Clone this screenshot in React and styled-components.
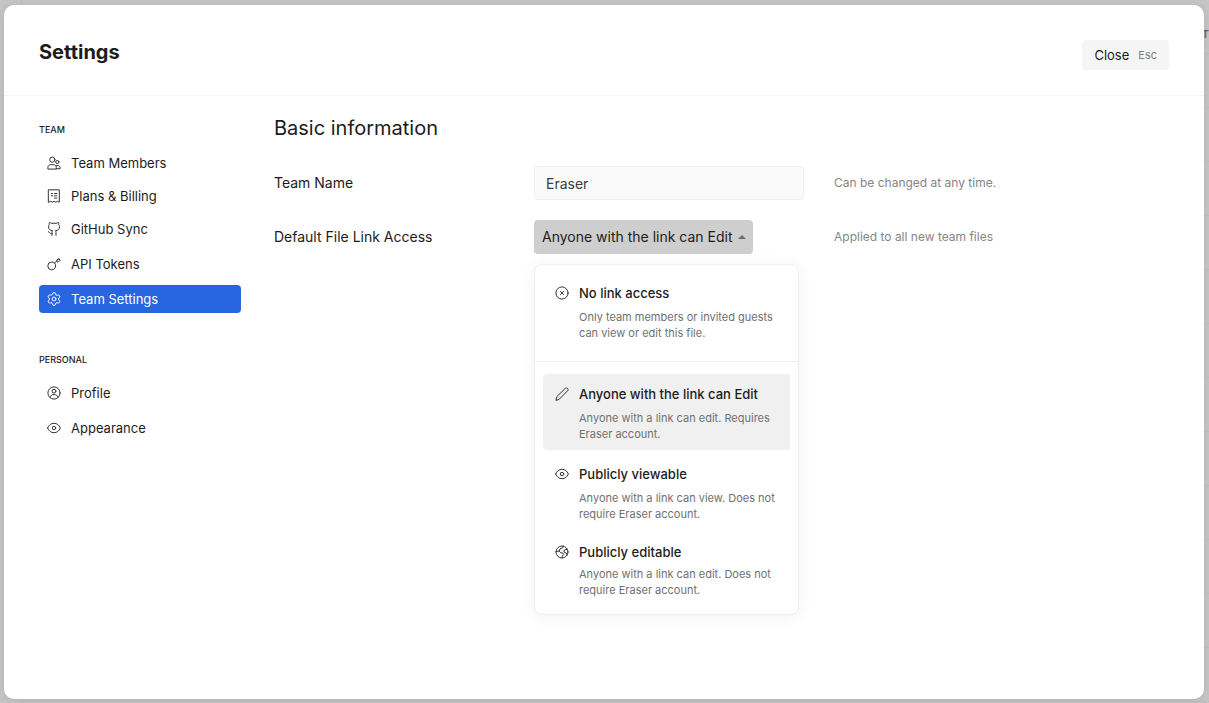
import React, { useState } from 'react';
import styled, { createGlobalStyle, css } from 'styled-components';

const Global = createGlobalStyle`
  *, *::before, *::after { box-sizing: border-box; }
  html, body, #root { height: 100%; }
  body {
    margin: 0;
    background: #c5c5c5;
    color: #1c1c1c;
    font-family: Inter, "Liberation Sans", sans-serif;
    -webkit-font-smoothing: antialiased;
  }
  button, input, select { font: inherit; color: inherit; }
  h1, h2, h3, p, ul { margin: 0; padding: 0; }
  ul { list-style: none; }
`;

const Backdrop = styled.div`
  position: relative;
  min-height: 100%;
  display: flex;
  padding: 5px 5px 4px 4px;
  overflow: hidden;
`;

const PageBehind = styled.div`
  position: absolute;
  inset: 0 0 0 21px;
  display: flex;
  justify-content: flex-end;
  padding-top: 26px;
  border-left: 1px solid #bebebe;
  background: repeating-linear-gradient(transparent 0 53px, #bdbdbd 53px 54px);
  color: #636363;
  font-size: 11px;
  font-weight: 600;
  line-height: 16px;
`;

const Modal = styled.section`
  position: relative;
  flex: 1;
  min-width: 0;
  display: flex;
  flex-direction: column;
  background: #fff;
  border-radius: 10px;
  box-shadow: 0 1px 8px rgba(0, 0, 0, 0.1);
`;

const Header = styled.header`
  display: flex;
  align-items: flex-start;
  justify-content: space-between;
  height: 91px;
  padding: 35px 35px 0;
  border-bottom: 1px solid #f4f4f4;
`;

const Title = styled.h1`
  font-size: 20px;
  font-weight: 700;
  line-height: 24px;
`;

const CloseButton = styled.button`
  display: flex;
  align-items: center;
  gap: 9px;
  height: 30px;
  padding: 0 12px;
  border: 0;
  border-radius: 4px;
  background: #f5f5f5;
  font-size: 13px;
`;

const Shortcut = styled.span`
  color: #808080;
  font-size: 11px;
`;

const Body = styled.div`
  flex: 1;
  display: flex;
  gap: 33px;
  padding: 0 35px;
`;

const Sidebar = styled.nav`
  flex: 0 0 202px;
  padding-top: 26px;
`;

const NavSection = styled.section`
  margin-bottom: 39px;
`;

const NavHeading = styled.h2`
  margin-bottom: 11px;
  font-size: 9px;
  font-weight: 500;
  line-height: 16px;
`;

const NavItem = styled.li`
  margin-top: ${(p) => (p.$tight ? 5 : 7)}px;
  &:first-child { margin-top: 0; }
`;

const Icon = styled.svg`
  flex: none;
  width: 14px;
  height: 14px;
  fill: none;
  stroke: #333;
  stroke-width: 1;
  stroke-linecap: round;
  stroke-linejoin: round;
`;

const NavLink = styled.a`
  display: flex;
  align-items: center;
  gap: 10px;
  height: 28px;
  padding: 0 8px;
  border-radius: 4px;
  color: inherit;
  font-size: 13px;
  line-height: 20px;
  text-decoration: none;
  ${(p) => p.$active && css`
    background: #2765e1;
    color: #fff;
    ${Icon} { stroke: #fff; }
  `}
`;

const Content = styled.main`
  flex: 1;
  min-width: 0;
  padding-top: 18px;
`;

const SectionTitle = styled.h2`
  margin-bottom: 24px;
  font-size: 20px;
  font-weight: 400;
  line-height: 28px;
`;

const Field = styled.div`
  display: grid;
  grid-template-columns: 230px 270px minmax(0, 1fr);
  column-gap: 30px;
  align-items: center;
  height: 34px;
  margin-bottom: 20px;
`;

const FieldLabel = styled.label`
  font-size: 14px;
  line-height: 20px;
`;

const Hint = styled.p`
  color: #858585;
  font-size: 12px;
  line-height: 16px;
`;

const TextInput = styled.input`
  width: 100%;
  height: 34px;
  padding: 0 11px;
  border: 1px solid #f0f0f0;
  border-radius: 4px;
  background: #fafafa;
  color: #3c3c3c;
  font-size: 14px;
`;

const Picker = styled.div`
  position: relative;
  justify-self: start;
`;

const Select = styled.select`
  display: block;
  height: 34px;
  padding: 0 20px 2px 8px;
  border: 0;
  border-radius: 4px;
  background: #cecece;
  font-size: 14px;
  appearance: none;
`;

const Caret = styled.span`
  position: absolute;
  top: 15px;
  right: 7px;
  border: solid transparent;
  border-width: 0 4px 4px;
  border-bottom-color: #6c6c6c;
  pointer-events: none;
`;

const Menu = styled.div`
  position: absolute;
  top: 44px;
  left: 0;
  width: 265px;
  border: 1px solid #f0f0f0;
  border-radius: 8px;
  background: #fff;
  box-shadow: 0 2px 16px rgba(0, 0, 0, 0.06);
`;

const MenuGroup = styled.div`
  display: flex;
  flex-direction: column;
  gap: 4px;
  padding: 8px 8px 12px;
  & + & {
    padding: 12px 8px 8px;
    border-top: 1px solid #f0f0f0;
  }
`;

const Option = styled.button`
  display: grid;
  grid-template-columns: 14px minmax(0, 1fr);
  column-gap: 10px;
  width: 100%;
  padding: ${(p) => (p.$snug ? 8 : 10)}px 12px 8px;
  border: 0;
  border-radius: 4px;
  background: ${(p) => (p.$selected ? '#f0f0f0' : 'transparent')};
  text-align: left;
  ${Icon} { margin-top: 3px; }
`;

const OptionName = styled.span`
  display: block;
  margin-bottom: ${(p) => (p.$snug ? 4 : 6)}px;
  font-size: 13px;
  font-weight: 500;
  line-height: 20px;
`;

const OptionText = styled.span`
  display: block;
  color: #707070;
  font-size: 11px;
  line-height: 16px;
`;

const shapes = {
  members: <><circle cx="5.3" cy="3.7" r="2.6" /><circle cx="10.3" cy="6" r="1.6" /><path d="M.9 12.7v-1.2C.9 9.8 2 8.7 3.7 8.7h2.8c1.7 0 2.8 1.1 2.8 2.8v1.2zM9.3 9.6h1.5c1.5 0 2.3.9 2.3 2.1v1H9.3" /></>,
  billing: <><path d="M1.7.8h10.6v12.4l-1.8-.9-1.7.9-1.8-.9-1.8.9-1.7-.9-1.8.9z" /><path d="M4.3 4.5h1.2M7.5 4.5h2.3M4.3 6.8h1.2M7.5 6.8h2.3M7.5 9.1h2.3" /></>,
  github: <><path d="M5 13.4v-3c0-.7.2-1.2.7-1.6-2.6-.3-4.2-1.5-4.2-4 0-.9.3-1.6.8-2.2-.2-.7-.2-1.3.1-2 1 0 1.8.4 2.5.8a9 9 0 0 1 4.2 0c.7-.4 1.5-.8 2.5-.8.3.7.3 1.3.1 2 .5.6.8 1.3.8 2.2 0 2.5-1.6 3.7-4.2 4 .5.4.7.9.7 1.6v3M5 11.4c-1.300.4-2 0-2.500-.8-.3-.5-.6-.8-1.100-.9" /></>,
  key: <><circle cx="4.7" cy="8.9" r="3.9" /><path d="m7.5 6.1 4.3-4.3M9.6 4l1.4 1.4 2.2-2.2-1.4-1.4z" /></>,
  settings: <g transform="translate(-.8 -.8) scale(.65)" strokeWidth="1.5"><path d="M9.671 4.136a2.34 2.34 0 0 1 4.659 0 2.34 2.34 0 0 0 3.319 1.915 2.34 2.34 0 0 1 2.33 4.033 2.34 2.34 0 0 0 0 3.831 2.34 2.34 0 0 1-2.33 4.033 2.34 2.34 0 0 0-3.319 1.915 2.34 2.34 0 0 1-4.659 0 2.34 2.34 0 0 0-3.32-1.915 2.34 2.34 0 0 1-2.33-4.033 2.34 2.34 0 0 0 0-3.831A2.34 2.34 0 0 1 6.35 6.051a2.34 2.34 0 0 0 3.319-1.915" /><circle cx="12" cy="12" r="3" /></g>,
  profile: <><circle cx="7" cy="7" r="6.1" /><circle cx="7" cy="5.2" r="1.9" /><path d="M3 11.3c.4-1.9 1.9-2.7 4-2.7s3.6.8 4 2.7" /></>,
  eye: <><path d="M.6 7c1.3-3 3.5-4.7 6.4-4.7S12.1 4 13.4 7c-1.3 3-3.5 4.7-6.4 4.7S1.9 10 .6 7z" /><circle cx="7" cy="7" r="1.7" /></>,
  blocked: <><circle cx="7" cy="7" r="6.1" /><path d="m5.4 5.4 3.2 3.2m0-3.2L5.4 8.6" /></>,
  pencil: <path d="m1 13 .8-3.3L10.3 1.3c1.4-1.3 3.7.9 2.4 2.4L4.3 12.2z" />,
  globe: <><circle cx="7" cy="7" r="6" /><path d="M1.2 6.5 4.3 6l.8-2.2 2.6-1 .6-1.7M4.3 6l1.2 1.7 2.3.3.9 1.5-1.5 1.7.2 1.7M12.1 4.2 9.3 5l-.4 2 2.3 1 .9 2" /></>,
};

const Glyph = ({ name }) => (
  <Icon viewBox="0 0 14 14" aria-hidden="true">{shapes[name]}</Icon>
);

const navigation = [
  { title: 'TEAM', items: [
    { icon: 'members', label: 'Team Members' },
    { icon: 'billing', label: 'Plans & Billing', tight: true },
    { icon: 'github', label: 'GitHub Sync', tight: true },
    { icon: 'key', label: 'API Tokens' },
    { icon: 'settings', label: 'Team Settings', active: true },
  ] },
  { title: 'PERSONAL', items: [
    { icon: 'profile', label: 'Profile' },
    { icon: 'eye', label: 'Appearance' },
  ] },
];

const accessGroups = [
  [{ id: 'none', icon: 'blocked', name: 'No link access', text: 'Only team members or invited guests can view or edit this file.' }],
  [
    { id: 'edit', icon: 'pencil', name: 'Anyone with the link can Edit', text: 'Anyone with a link can edit. Requires Eraser account.' },
    { id: 'view', icon: 'eye', name: 'Publicly viewable', text: 'Anyone with a link can view. Does not require Eraser account.' },
    { id: 'public', icon: 'globe', name: 'Publicly editable', text: 'Anyone with a link can edit. Does not require Eraser account.', snug: true },
  ],
];

export default function App() {
  const [team, setTeam] = useState('Eraser');
  const [access, setAccess] = useState('edit');
  const [open, setOpen] = useState(true);

  return (
    <>
      <Global />
      <Backdrop>
        <PageBehind aria-hidden="true">T</PageBehind>
        <Modal role="dialog" aria-labelledby="settings-title">
          <Header>
            <Title id="settings-title">Settings</Title>
            <CloseButton type="button">Close <Shortcut>Esc</Shortcut></CloseButton>
          </Header>
          <Body>
            <Sidebar aria-label="Settings sections">
              {navigation.map((section) => (
                <NavSection key={section.title}>
                  <NavHeading>{section.title}</NavHeading>
                  <ul>
                    {section.items.map((item) => (
                      <NavItem key={item.label} $tight={item.tight}>
                        <NavLink href="#" $active={item.active} aria-current={item.active ? 'page' : undefined}>
                          <Glyph name={item.icon} />
                          {item.label}
                        </NavLink>
                      </NavItem>
                    ))}
                  </ul>
                </NavSection>
              ))}
            </Sidebar>
            <Content>
              <SectionTitle>Basic information</SectionTitle>
              <Field>
                <FieldLabel htmlFor="team-name">Team Name</FieldLabel>
                <TextInput id="team-name" value={team} onChange={(e) => setTeam(e.target.value)} />
                <Hint>Can be changed at any time.</Hint>
              </Field>
              <Field>
                <FieldLabel htmlFor="link-access">Default File Link Access</FieldLabel>
                <Picker>
                  <Select
                    id="link-access"
                    value={access}
                    onChange={(e) => setAccess(e.target.value)}
                    onMouseDown={(e) => { e.preventDefault(); setOpen(!open); }}
                  >
                    {accessGroups.flat().map((o) => <option key={o.id} value={o.id}>{o.name}</option>)}
                  </Select>
                  <Caret />
                  {open && (
                    <Menu>
                      {accessGroups.map((group) => (
                        <MenuGroup key={group[0].id}>
                          {group.map((o) => (
                            <Option
                              key={o.id}
                              type="button"
                              $snug={o.snug}
                              $selected={o.id === access}
                              aria-pressed={o.id === access}
                              onClick={() => { setAccess(o.id); setOpen(false); }}
                            >
                              <Glyph name={o.icon} />
                              <span>
                                <OptionName $snug={o.snug}>{o.name}</OptionName>
                                <OptionText>{o.text}</OptionText>
                              </span>
                            </Option>
                          ))}
                        </MenuGroup>
                      ))}
                    </Menu>
                  )}
                </Picker>
                <Hint>Applied to all new team files</Hint>
              </Field>
            </Content>
          </Body>
        </Modal>
      </Backdrop>
    </>
  );
}
